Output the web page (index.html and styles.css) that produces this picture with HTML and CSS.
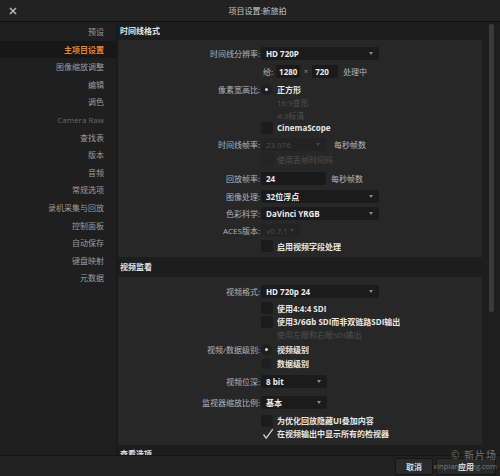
FILE: index.html
```html
<!DOCTYPE html>
<html lang="zh">
<head>
<meta charset="utf-8">
<title>项目设置</title>
<link rel="stylesheet" href="styles.css">
</head>
<body>
<div class="window">
  <div class="titlebar">
    <svg class="close" width="8" height="8" viewBox="0 0 8 8"><path d="M1 1 L7 7 M7 1 L1 7" stroke="#b0b0b0" stroke-width="1.7" fill="none"/></svg>
    <div class="title">项目设置:新旅拍</div>
  </div>
  <div class="body">
    <nav class="sidebar">
      <div class="nav-item">预设</div>
      <div class="nav-item active">主项目设置</div>
      <div class="nav-item">图像缩放调整</div>
      <div class="nav-item">编辑</div>
      <div class="nav-item">调色</div>
      <div class="nav-item dim">Camera Raw</div>
      <div class="nav-item">查找表</div>
      <div class="nav-item">版本</div>
      <div class="nav-item">音频</div>
      <div class="nav-item">常规选项</div>
      <div class="nav-item">录机采集与回放</div>
      <div class="nav-item">控制面板</div>
      <div class="nav-item">自动保存</div>
      <div class="nav-item">键盘映射</div>
      <div class="nav-item">元数据</div>
    </nav>
    <div class="main">
      <div class="scroll">
        <div class="sec-head">时间线格式</div>
        <div class="panel p1">
          <div class="row h18">
            <div class="label">时间线分辨率:</div>
            <div class="ctrl"><div class="dropdown w118"><span>HD 720P</span><i class="caret"></i></div></div>
          </div>
          <div class="row h18">
            <div class="label"></div>
            <div class="ctrl">
              <span class="plain give">给:</span>
              <div class="input w24">1280</div>
              <span class="times">×</span>
              <div class="input w26">720</div>
              <span class="plain after5">处理中</span>
            </div>
          </div>
          <div class="row h13 mt3">
            <div class="label">像素宽高比:</div>
            <div class="ctrl"><span class="radio on"></span><span class="opt">正方形</span></div>
          </div>
          <div class="row h13">
            <div class="label"></div>
            <div class="ctrl"><span class="opt dimtext indent">16:9变形</span></div>
          </div>
          <div class="row h12">
            <div class="label"></div>
            <div class="ctrl"><span class="opt dimtext indent">4:3标清</span></div>
          </div>
          <div class="row h13">
            <div class="label"></div>
            <div class="ctrl"><span class="check"></span><span class="opt">CinemaScope</span></div>
          </div>
          <div class="row h18 mt1">
            <div class="label">时间线帧率:</div>
            <div class="ctrl"><div class="dropdown w65 disabled"><span>23.976</span><i class="caret"></i></div><span class="plain after8">每秒帧数</span></div>
          </div>
          <div class="row h12">
            <div class="label"></div>
            <div class="ctrl"><span class="check faint"></span><span class="opt dimtext">使用丢帧时间码</span></div>
          </div>
          <div class="row h18 mt4">
            <div class="label">回放帧率:</div>
            <div class="ctrl"><div class="input w65 pl5">24</div><span class="plain after5">每秒帧数</span></div>
          </div>
          <div class="row h18">
            <div class="label">图像处理:</div>
            <div class="ctrl"><div class="dropdown w118"><span>32位浮点</span><i class="caret"></i></div></div>
          </div>
          <div class="row h17">
            <div class="label">色彩科学:</div>
            <div class="ctrl"><div class="dropdown w118"><span>DaVinci YRGB</span><i class="caret"></i></div></div>
          </div>
          <div class="row h17">
            <div class="label">ACES版本:</div>
            <div class="ctrl"><div class="dropdown w39 disabled"><span>v0.7.1</span><i class="caret"></i></div></div>
          </div>
          <div class="row h14">
            <div class="label"></div>
            <div class="ctrl"><span class="check"></span><span class="opt">启用视频字段处理</span></div>
          </div>
        </div>

        <div class="sec-head tall">视频监看</div>
        <div class="panel p2">
          <div class="row h18">
            <div class="label">视频格式:</div>
            <div class="ctrl"><div class="dropdown w118"><span>HD 720p 24</span><i class="caret"></i></div></div>
          </div>
          <div class="row h14 mt1">
            <div class="label"></div>
            <div class="ctrl"><span class="check"></span><span class="opt">使用4:4:4 SDI</span></div>
          </div>
          <div class="row h13">
            <div class="label"></div>
            <div class="ctrl"><span class="check"></span><span class="opt">使用3/6Gb SDI而非双链路SDI输出</span></div>
          </div>
          <div class="row h13">
            <div class="label"></div>
            <div class="ctrl"><span class="opt dimtext indent">使用左眼和右眼SDI输出</span></div>
          </div>
          <div class="row h14 mt1">
            <div class="label">视频/数据级别:</div>
            <div class="ctrl"><span class="radio on"></span><span class="opt">视频级别</span></div>
          </div>
          <div class="row h14">
            <div class="label"></div>
            <div class="ctrl"><span class="radio"></span><span class="opt">数据级别</span></div>
          </div>
          <div class="row h18 mt2">
            <div class="label">视频位深:</div>
            <div class="ctrl"><div class="dropdown w66"><span>8 bit</span><i class="caret"></i></div></div>
          </div>
          <div class="row h18 mt3">
            <div class="label">监视器缩放比例:</div>
            <div class="ctrl"><div class="dropdown w66"><span>基本</span><i class="caret"></i></div></div>
          </div>
          <div class="row h13 mt3">
            <div class="label"></div>
            <div class="ctrl"><span class="check"></span><span class="opt">为优化回放隐藏UI叠加内容</span></div>
          </div>
          <div class="row h13">
            <div class="label"></div>
            <div class="ctrl">
              <svg class="tick" width="12" height="12" viewBox="0 0 12 12"><path d="M1.5 6.5 L4.2 10.2 L10.8 1.2" stroke="#cfcfcf" stroke-width="1.3" fill="none"/></svg>
              <span class="opt">在视频输出中显示所有的检视器</span>
            </div>
          </div>
        </div>

        <div class="sec-head">查看选项</div>
      </div>
      <div class="scrollbar"><div class="thumb"></div></div>
    </div>
  </div>
  <div class="footer">
    <button class="btn cancel">取消</button>
    <button class="btn apply">应用</button>
  </div>
  <div class="watermark">
    <div class="wm1">© 新片场</div>
    <div class="wm2">xinpianchang.com</div>
  </div>
</div>
</body>
</html>
```
FILE: styles.css
```css
html, body {
  margin: 0;
  padding: 0;
  background: #1e1e1e;
}
body {
  font-family: "Open Sans", "Noto Sans CJK SC", sans-serif;
  font-size: 8px;
  color: #b8b8b8;
}
.window {
  position: relative;
  width: 500px;
  height: 476px;
  display: flex;
  flex-direction: column;
  overflow: hidden;
}
.titlebar {
  height: 21px;
  border-bottom: 1px solid #0e0e0e;
  background: #222222;
  display: flex;
  align-items: center;
  padding-left: 9px;
  flex: none;
}
.close {
  flex: none;
}
.title {
  flex: 1;
  text-align: center;
  color: #c6c6c6;
  padding-right: 2px;
}
.body {
  display: flex;
  height: 433px;
  flex: none;
}
.sidebar {
  width: 118px;
  border-right: 2px solid #191919;
  background: #1f1f1f;
  padding-top: 1px;
  box-sizing: border-box;
  flex: none;
}
.nav-item {
  height: 17.6px;
  line-height: 17.6px;
  text-align: right;
  padding-right: 12px;
  color: #9c9c9c;
  white-space: nowrap;
}
.nav-item.active {
  background: #171717;
  color: #e8842a;
  font-weight: bold;
}
.nav-item.dim {
  color: #686868;
}
.main {
  flex: 1;
  display: flex;
  background: #1e1e1e;
}
.scroll {
  width: 368px;
  overflow: hidden;
  flex: none;
}
.sec-head {
  height: 18px;
  line-height: 17px;
  padding-left: 2px;
  font-weight: bold;
  color: #e4e4e4;
  background: #1d1d1d;
  margin-right: 1px;
}
.sec-head.tall {
  height: 20px;
  line-height: 20px;
}
.panel {
  background: #272727;
  margin-right: 4px;
}
.p1 { padding: 4px 0; }
.p2 { padding: 5px 0; }
.row {
  display: grid;
  grid-template-columns: 142px 1fr;
  column-gap: 1px;
  align-items: center;
}
.h12 { height: 12px; }
.h13 { height: 13px; }
.h14 { height: 14px; }
.h17 { height: 17px; }
.h18 { height: 18px; }
.mt1 { margin-top: 1px; }
.mt2 { margin-top: 2px; }
.mt3 { margin-top: 3px; }
.mt4 { margin-top: 4px; }
.label {
  text-align: right;
  color: #b4b4b4;
  white-space: nowrap;
}
.ctrl {
  display: flex;
  align-items: center;
  white-space: nowrap;
}
.dropdown {
  height: 13px;
  background: #1b1b1b;
  border-radius: 2px;
  display: flex;
  align-items: center;
  justify-content: space-between;
  padding: 0 6px 0 5px;
  box-sizing: border-box;
  color: #ececec;
  font-weight: bold;
}
.dropdown.disabled {
  color: #4f4f4f;
  font-weight: normal;
  background: #232323;
}
.dropdown.disabled .caret {
  border-top-color: #444;
}
.w118 { width: 118px; }
.w66 { width: 66px; }
.w65 { width: 65px; }
.w39 { width: 39px; }
.caret {
  width: 0;
  height: 0;
  border-left: 2.5px solid transparent;
  border-right: 2.5px solid transparent;
  border-top: 3px solid #8c8c8c;
}
.input {
  height: 13px;
  line-height: 13px;
  background: #1a1a1a;
  border-radius: 1px;
  padding-left: 3px;
  box-sizing: border-box;
  color: #ececec;
  font-weight: bold;
}
.input.pl5 { padding-left: 5px; }
.w24 { width: 24px; }
.w26 { width: 26px; }
.plain {
  color: #b8b8b8;
}
.give {
  margin-left: 2px;
  margin-right: 3px;
}
.times {
  color: #9a9a9a;
  margin: 0 4px;
  font-size: 7px;
}
.after5 { margin-left: 5px; }
.after8 { margin-left: 8px; }
.radio {
  width: 11px;
  height: 11px;
  border-radius: 50%;
  background: #1f1f1f;
  position: relative;
  flex: none;
  margin-right: 5px;
}
.radio.on::after {
  content: "";
  position: absolute;
  left: 4px;
  top: 4px;
  width: 3px;
  height: 3px;
  border-radius: 50%;
  background: #d8d8d8;
}
.check {
  width: 12px;
  height: 12px;
  border-radius: 2px;
  background: #1c1c1c;
  flex: none;
  margin-right: 4px;
}
.check.faint {
  background: #242424;
}
.tick {
  flex: none;
  margin-left: 1px;
  margin-right: 3px;
}
.opt {
  color: #e6e6e6;
  font-weight: bold;
}
.opt.dimtext {
  color: #505050;
  font-weight: normal;
}
.indent {
  margin-left: 16px;
}
.scrollbar {
  flex: 1;
  position: relative;
}
.thumb {
  margin-top: 2px;
  margin-left: 3px;
  width: 5px;
  height: 288px;
  background: #3a3a3a;
  border-radius: 2px;
}
.footer {
  flex: 1;
  background: #212121;
  border-top: 1px solid #141414;
  display: flex;
  justify-content: flex-end;
  align-items: center;
  padding-right: 4px;
  gap: 3px;
}
.btn {
  height: 17px;
  background: #2a2a2a;
  border: 1px solid #161616;
  border-radius: 2px;
  color: #d8d8d8;
  font-family: "Open Sans", "Noto Sans CJK SC", sans-serif;
  font-size: 8px;
  font-weight: bold;
  padding: 0;
}
.cancel { width: 38px; }
.apply { width: 60px; }
.watermark {
  position: absolute;
  right: 3px;
  bottom: 5px;
  text-align: right;
  color: rgba(190, 190, 190, 0.55);
  pointer-events: none;
}
.wm1 {
  font-size: 10px;
  line-height: 12px;
  letter-spacing: 1px;
}
.wm2 {
  font-size: 7.5px;
  line-height: 10px;
}
```
